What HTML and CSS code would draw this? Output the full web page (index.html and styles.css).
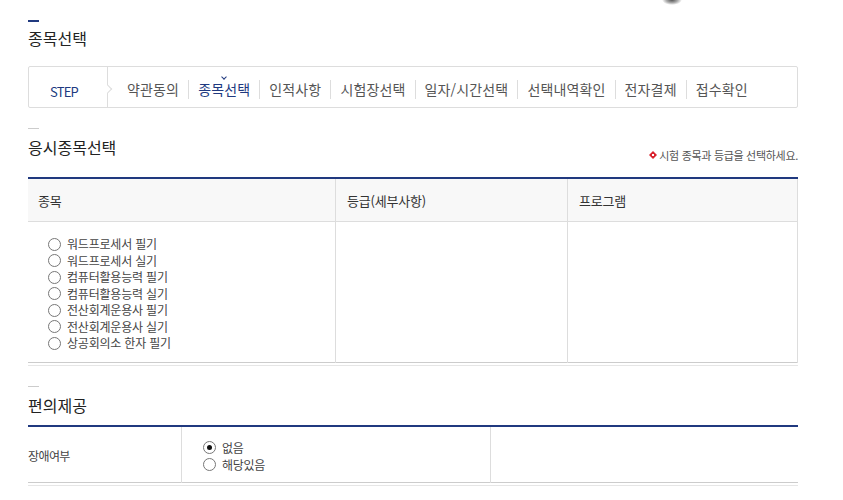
FILE: index.html
```html
<!DOCTYPE html>
<html lang="ko">
<head>
    <meta charset="UTF-8">
    <meta name="viewport" content="width=device-width, initial-scale=1.0">
    <title>종목선택</title>
    <link rel="stylesheet" href="styles.css">
</head>
<body>
    <div class="top-shadow"></div>

    <div class="wrap">
        <h2 class="page-title">종목선택</h2>

        <!-- 접수 단계 -->
        <div class="steps">
            <div class="step-label">STEP</div>
            <ul class="step-list">
                <li>약관동의</li>
                <li class="on">종목선택</li>
                <li>인적사항</li>
                <li>시험장선택</li>
                <li>일자/시간선택</li>
                <li>선택내역확인</li>
                <li>전자결제</li>
                <li>접수확인</li>
            </ul>
        </div>

        <!-- 응시종목선택 -->
        <div class="sec-head">
            <h3 class="sec-title">응시종목선택</h3>
            <p class="note">
                <svg class="note-ico" width="8" height="8" viewBox="0 0 8 8">
                    <path d="M4 0 L8 4 L4 8 L0 4 Z" fill="#d9232e"/>
                    <rect x="3" y="3" width="2" height="2" fill="#fff"/>
                </svg>시험 종목과 등급을 선택하세요.
            </p>
        </div>
        <div class="tbl-wrap">
            <table class="tbl tbl-subject">
                <thead>
                    <tr>
                        <th class="col1">종목</th>
                        <th class="col2">등급(세부사항)</th>
                        <th class="col3">프로그램</th>
                    </tr>
                </thead>
                <tbody>
                    <tr>
                        <td class="subject-cell">
                            <ul class="radio-list">
                                <li><span class="radio"></span>워드프로세서 필기</li>
                                <li><span class="radio"></span>워드프로세서 실기</li>
                                <li><span class="radio"></span>컴퓨터활용능력 필기</li>
                                <li><span class="radio"></span>컴퓨터활용능력 실기</li>
                                <li><span class="radio"></span>전산회계운용사 필기</li>
                                <li><span class="radio"></span>전산회계운용사 실기</li>
                                <li><span class="radio"></span>상공회의소 한자 필기</li>
                            </ul>
                        </td>
                        <td></td>
                        <td></td>
                    </tr>
                </tbody>
            </table>
        </div>

        <!-- 편의제공 -->
        <h3 class="sec-title sec-title-2">편의제공</h3>
        <div class="tbl-wrap">
            <table class="tbl tbl-form">
                <tr>
                    <th class="form-label">장애여부</th>
                    <td class="form-cell">
                        <ul class="radio-list radio-list-2">
                            <li><span class="radio checked"></span>없음</li>
                            <li><span class="radio"></span>해당있음</li>
                        </ul>
                    </td>
                    <td></td>
                </tr>
            </table>
        </div>
    </div>
</body>
</html>
```

FILE: styles.css
```css
body {
    margin: 0;
    background: #fff;
    font-family: "Noto Sans CJK KR", "Noto Sans", sans-serif;
    color: #333;
}

.top-shadow {
    position: absolute;
    top: 0;
    left: 662px;
    width: 20px;
    height: 5px;
    background: radial-gradient(ellipse at 50% 0%, #555 0%, rgba(90, 90, 90, 0.5) 40%, rgba(255, 255, 255, 0) 70%);
}

.wrap {
    width: 770px;
    margin-left: 28px;
    padding-top: 20px;
}

/* 제목 */
.page-title {
    margin: 0;
    font-size: 16px;
    font-weight: normal;
    line-height: 20px;
    color: #222;
}

.page-title::before {
    content: "";
    display: block;
    width: 11px;
    height: 2px;
    background: #20397f;
    margin-bottom: 6px;
}

/* 단계 */
.steps {
    display: flex;
    height: 40px;
    margin-top: 18px;
    border: 1px solid #ddd;
    border-radius: 2px;
}

.step-label {
    position: relative;
    width: 79px;
    padding: 16px 0 0 21px;
    box-sizing: border-box;
    border-right: 1px solid #ddd;
    font-size: 13px;
    line-height: 18px;
    letter-spacing: -0.8px;
    color: #20397f;
}

.step-label::after {
    content: "";
    position: absolute;
    top: 19px;
    right: -4px;
    width: 5px;
    height: 5px;
    background: #fff;
    border-top: 1px solid #ddd;
    border-right: 1px solid #ddd;
    transform: rotate(45deg);
}

.step-list {
    display: flex;
    margin: 0;
    padding: 13px 0 0 10px;
    list-style: none;
}

.step-list li {
    position: relative;
    height: 19px;
    padding: 0 9px;
    border-left: 1px solid #ddd;
    font-size: 14px;
    line-height: 19px;
    letter-spacing: 0.15px;
    color: #555;
}

.step-list li:first-child {
    border-left: 0;
    padding-left: 9px;
}

.step-list li.on {
    color: #20397f;
}

.step-list li.on::before {
    content: "";
    position: absolute;
    top: -5px;
    left: 50%;
    width: 3px;
    height: 3px;
    margin-left: -2px;
    border-right: 1px solid #20397f;
    border-bottom: 1px solid #20397f;
    transform: rotate(45deg);
}

/* 섹션 */
.sec-head {
    display: flex;
    justify-content: space-between;
    align-items: flex-end;
    margin-top: 20px;
    margin-bottom: 15px;
}

.sec-title {
    margin: 0 0 5px;
    font-size: 16px;
    font-weight: normal;
    line-height: 20px;
    color: #222;
}

.sec-title::before {
    content: "";
    display: block;
    width: 11px;
    height: 1px;
    background: #ccc;
    margin-bottom: 8px;
}

.sec-title-2 {
    margin: 20px 0 10px;
}

.note {
    display: flex;
    align-items: center;
    margin: 0;
    font-size: 11px;
    line-height: 14px;
    letter-spacing: -0.3px;
    color: #555;
}

.note-ico {
    margin-right: 2px;
}

/* 표 */
.tbl-wrap {
    padding-bottom: 2px;
    border-bottom: 1px solid #e6e6e6;
}

.tbl {
    width: 100%;
    border-collapse: collapse;
    border-top: 2px solid #20397f;
    border-bottom: 1px solid #ccc;
}

.tbl th,
.tbl td {
    padding: 0;
    text-align: left;
    vertical-align: top;
    font-weight: normal;
}

.tbl-subject thead th {
    height: 17px;
    padding: 13px 10px 12px;
    background: #f8f8f8;
    border-bottom: 1px solid #ddd;
    font-size: 13px;
    line-height: 17px;
    letter-spacing: -0.2px;
    color: #333;
}

.tbl-subject .col1 { width: 287px; }
.tbl-subject .col2 { width: 210px; padding-left: 11px; }
.tbl-subject .col3 { padding-left: 11px; }

.tbl-subject th + th,
.tbl-subject td + td {
    border-left: 1px solid #ddd;
}

.tbl-subject th:last-child,
.tbl-subject td:last-child {
    border-right: 1px solid #ddd;
}

.subject-cell {
    padding: 14px 10px 10px 20px !important;
}

.radio-list {
    margin: 0;
    padding: 0;
    list-style: none;
}

.radio-list li {
    display: flex;
    align-items: center;
    height: 16.5px;
    font-size: 12px;
    line-height: 16.5px;
    letter-spacing: -0.2px;
    color: #444;
}

.radio {
    width: 11px;
    height: 11px;
    margin-right: 6px;
    border: 1px solid #777;
    border-radius: 50%;
    box-sizing: content-box;
    position: relative;
}

.radio.checked::after {
    content: "";
    position: absolute;
    top: 3px;
    left: 3px;
    width: 5px;
    height: 5px;
    border-radius: 50%;
    background: #111;
}

/* 편의제공 */
.tbl-form tr {
    height: 56px;
}

.form-label {
    width: 153px;
    vertical-align: middle !important;
    font-size: 12px;
    letter-spacing: -0.6px;
    color: #444;
    padding-top: 2px !important;
}

.form-cell {
    width: 287px;
    padding: 12px 0 8px 21px !important;
    border-left: 1px solid #ddd;
    border-right: 1px solid #ddd;
}

.radio-list-2 li {
    height: 17.5px;
    line-height: 17.5px;
    letter-spacing: -0.3px;
}
```
